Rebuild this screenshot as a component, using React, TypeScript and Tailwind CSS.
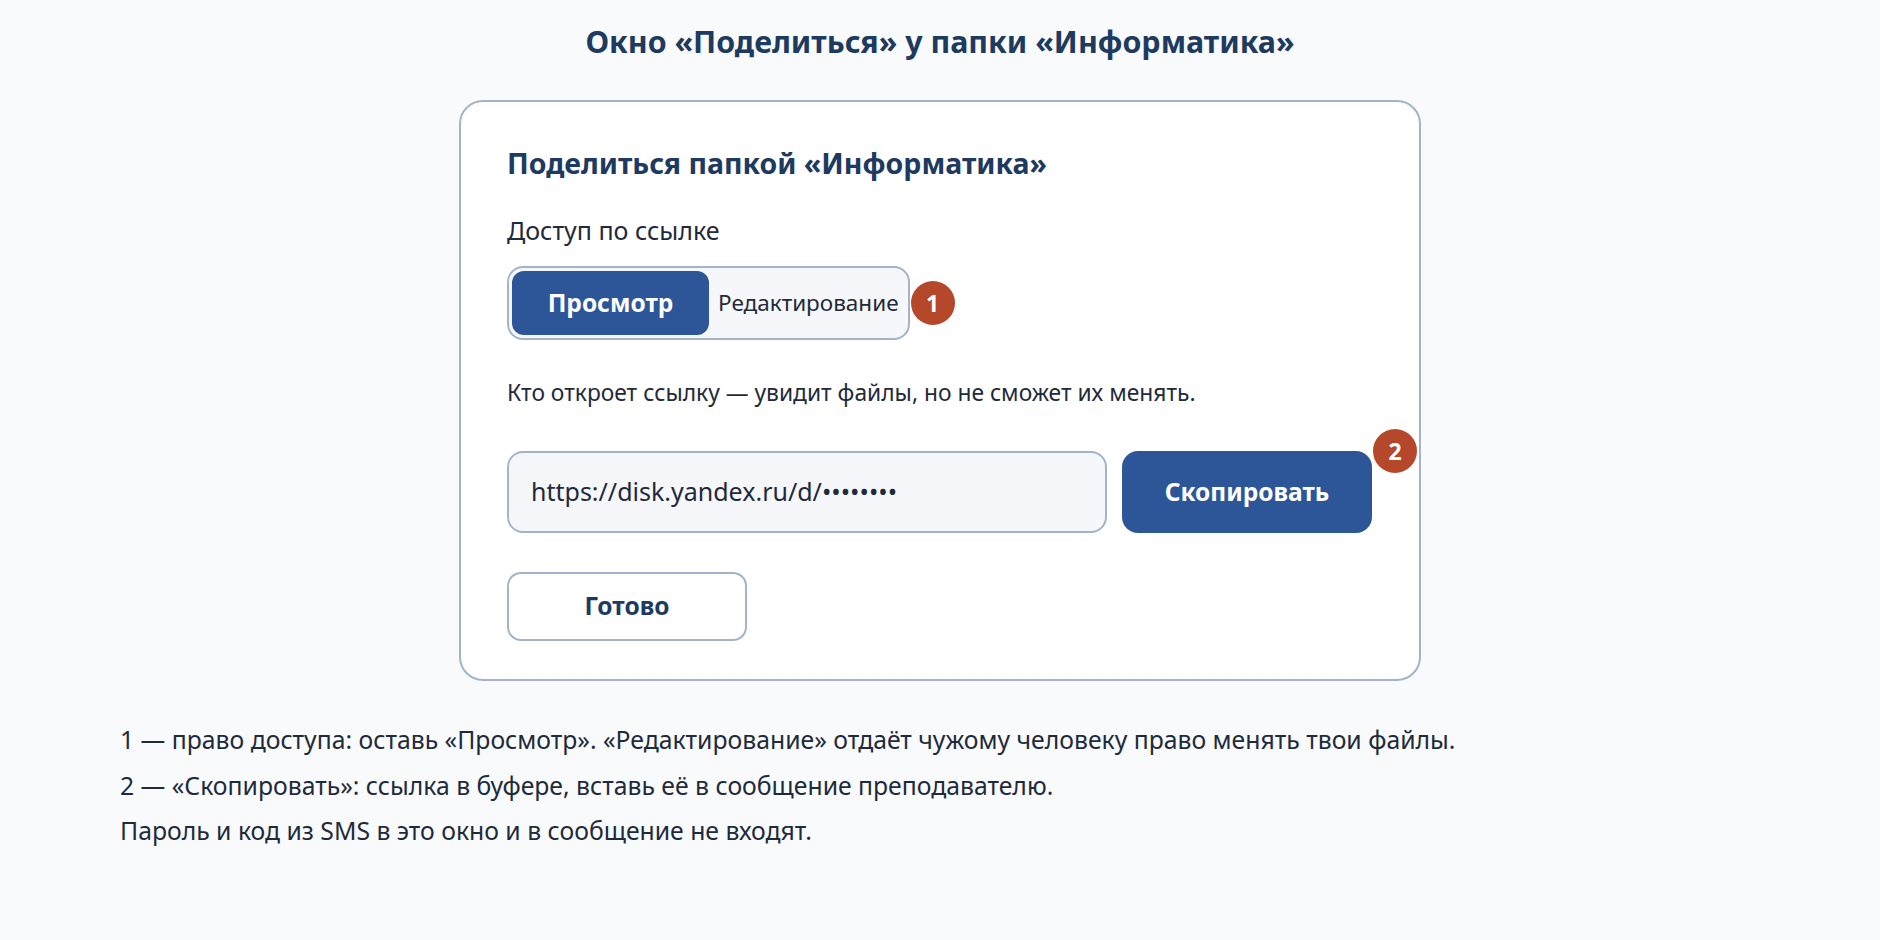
const font = "font-['Noto_Sans','Open_Sans',sans-serif]";

function Badge({ n }: { n: number }) {
  return (
    <span className="flex h-[44px] w-[44px] shrink-0 items-center justify-center rounded-full bg-[#b5472b] text-[23px] font-bold leading-none text-white">
      {n}
    </span>
  );
}

export default function App() {
  return (
    <div className={`min-h-screen bg-[#f8fafc] text-[#1f2a3a] ${font}`}>
      <h1 className="pt-[22px] text-center text-[30.4px] font-bold leading-[40px] text-[#1e3a5f]">
        Окно «Поделиться» у папки «Информатика»
      </h1>

      <div className="mx-auto mt-[38px] w-[962px] rounded-[24px] border-2 border-[#a3b3c8] bg-white px-[46px] pb-[38px] pt-[44px]">
        <h2 className="text-[28.5px] font-bold leading-[34px] text-[#1e3a5f]">
          Поделиться папкой «Информатика»
        </h2>

        <p className="mt-[35px] text-[25px] leading-[31px]">Доступ по ссылке</p>

        {/* переключатель права доступа */}
        <div className="mt-[20px] flex items-center gap-[1px]">
          <div className="flex h-[74px] items-center rounded-[16px] border-2 border-[#a3b3c8] bg-[#f5f7fb] p-[3px]">
            <button className="flex h-[64px] w-[197px] items-center justify-center rounded-[12px] bg-[#2c5697] text-[24.5px] font-bold text-white">
              Просмотр
            </button>
            <button className="flex h-[64px] items-center pl-[9px] pr-[6px] text-[22.5px]">
              Редактирование
            </button>
          </div>
          <Badge n={1} />
        </div>

        <p className="mt-[37px] text-[22.8px] leading-[31px]">
          Кто откроет ссылку — увидит файлы, но не сможет их менять.
        </p>

        <div className="mt-[43px] flex gap-[15px]">
          <div className="flex h-[82px] w-[600px] items-center rounded-[16px] border-2 border-[#a3b3c8] bg-[#f5f7fb] pl-[22px] text-[25px] text-[#1e293b]">
            https://disk.yandex.ru/d/••••••••
          </div>
          <div className="relative">
            <button className="flex h-[82px] w-[250px] items-center justify-center rounded-[16px] bg-[#2c5697] text-[24.5px] font-bold text-white">
              Скопировать
            </button>
            <div className="absolute right-[-45px] top-[-22px]">
              <Badge n={2} />
            </div>
          </div>
        </div>

        <button className="mt-[39px] flex h-[69px] w-[240px] items-center justify-center rounded-[14px] border-2 border-[#a3b3c8] bg-white text-[24.5px] font-bold text-[#1e3a5f]">
          Готово
        </button>
      </div>

      <div className="mt-[42px] flex flex-col gap-[11.5px] px-[120px] text-[24.75px] leading-[34px]">
        <p>
          1 — право доступа: оставь «Просмотр». «Редактирование» отдаёт чужому человеку право менять твои файлы.
        </p>
        <p>2 — «Скопировать»: ссылка в буфере, вставь её в сообщение преподавателю.</p>
        <p>Пароль и код из SMS в это окно и в сообщение не входят.</p>
      </div>
    </div>
  );
}
